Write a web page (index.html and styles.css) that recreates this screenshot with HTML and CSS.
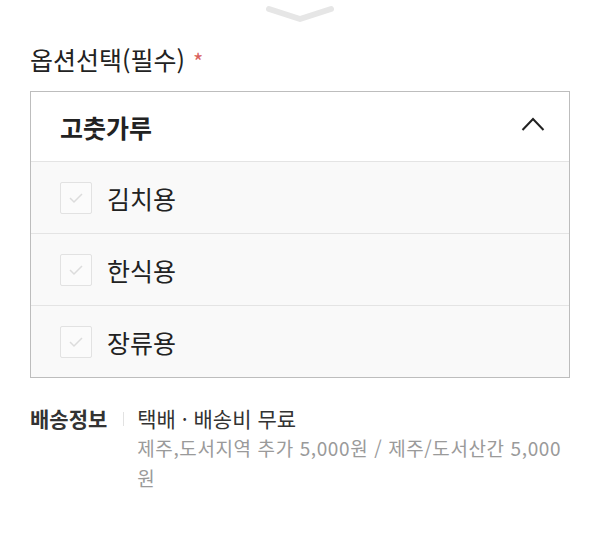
FILE: index.html
```
<!DOCTYPE html>
<html lang="ko">
<head>
    <meta charset="UTF-8">
    <meta name="viewport" content="width=device-width, initial-scale=1.0">
    <title>옵션선택</title>
    <link rel="stylesheet" href="styles.css">
</head>
<body>
    <div class="handle">
        <svg width="70" height="22" viewBox="0 0 70 22">
            <polyline points="4,6 35,16 66,6" fill="none" stroke="#e6e6e6" stroke-width="6" stroke-linecap="round" stroke-linejoin="round"/>
        </svg>
    </div>
    <div class="wrap">
        <p class="label">옵션선택(필수) <span class="required">*</span></p>
        <div class="select">
            <div class="select-head">
                <span class="select-title">고춧가루</span>
                <svg class="arrow" width="24" height="14" viewBox="0 0 24 14">
                    <polyline points="1.5,13 12,2 22.5,13" fill="none" stroke="#222" stroke-width="2"/>
                </svg>
            </div>
            <div class="option">
                <span class="check">
                    <svg width="16" height="12" viewBox="0 0 16 12"><polyline points="2,6 6,10 14,2" fill="none" stroke="#dcdcdc" stroke-width="1.5"/></svg>
                </span>
                <span class="option-name">김치용</span>
            </div>
            <div class="option">
                <span class="check">
                    <svg width="16" height="12" viewBox="0 0 16 12"><polyline points="2,6 6,10 14,2" fill="none" stroke="#dcdcdc" stroke-width="1.5"/></svg>
                </span>
                <span class="option-name">한식용</span>
            </div>
            <div class="option">
                <span class="check">
                    <svg width="16" height="12" viewBox="0 0 16 12"><polyline points="2,6 6,10 14,2" fill="none" stroke="#dcdcdc" stroke-width="1.5"/></svg>
                </span>
                <span class="option-name">장류용</span>
            </div>
        </div>
        <div class="delivery">
            <span class="delivery-label">배송정보</span>
            <span class="bar"></span>
            <div class="delivery-info">
                <p class="delivery-main">택배 · 배송비 무료</p>
                <p class="delivery-sub">제주,도서지역 추가 5,000원 / 제주/도서산간 5,000원</p>
            </div>
        </div>
    </div>
</body>
</html>
```

FILE: styles.css
```
* {
    margin: 0;
    padding: 0;
    box-sizing: border-box;
}
body {
    background: #fff;
    font-family: "Noto Sans CJK KR", "Noto Sans", sans-serif;
    color: #222;
}
.handle {
    height: 28px;
    padding-top: 3px;
    display: flex;
    justify-content: center;
}
.wrap {
    padding: 0 30px;
}
.label {
    margin-top: 15px;
    font-size: 25px;
    line-height: 32px;
}
.required {
    margin-left: 1px;
    color: #d9625d;
    font-size: 22px;
}
.select {
    margin-top: 15px;
    border: 1px solid #bdbdbd;
}
.select-head {
    height: 70px;
    padding: 0 24px 0 29px;
    display: flex;
    align-items: center;
    justify-content: space-between;
    background: #fff;
    border-bottom: 1px solid #e4e4e4;
}
.select-title {
    font-size: 25px;
    font-weight: 700;
}
.arrow {
    margin-top: -6px;
}
.option {
    height: 72px;
    padding-left: 29px;
    display: flex;
    align-items: center;
    background: #f9f9f9;
    border-bottom: 1px solid #e4e4e4;
}
.option:last-child {
    border-bottom: none;
    height: 71px;
}
.check {
    width: 32px;
    height: 32px;
    margin-right: 15px;
    border: 1px solid #e2e2e2;
    border-radius: 2px;
    background: #fbfbfb;
    display: flex;
    align-items: center;
    justify-content: center;
}
.option-name {
    font-size: 25px;
}
.delivery {
    margin-top: 25px;
    display: flex;
    font-size: 21px;
    line-height: 30px;
}
.delivery-label {
    font-weight: 700;
    color: #333;
    white-space: nowrap;
}
.bar {
    width: 1px;
    height: 14px;
    margin: 9px 13px 0 16px;
    background: #e2e2e2;
}
.delivery-info {
    flex: 1;
}
.delivery-main {
    color: #333;
}
.delivery-sub {
    font-size: 19px;
    letter-spacing: 0.6px;
    color: #9a9a9a;
}
```
